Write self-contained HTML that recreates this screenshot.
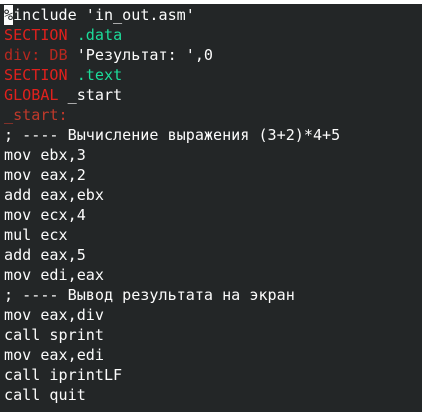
<!DOCTYPE html>
<html><head><meta charset="utf-8"><style>
html,body{margin:0;padding:0;width:424px;height:412px;overflow:hidden;background:#fff;}
#t{position:absolute;left:0;top:4px;width:422px;height:408px;background:#232627;}
pre{margin:0;position:absolute;left:4px;top:1px;font-family:"DejaVu Sans Mono","Liberation Mono",monospace;font-size:15.1px;line-height:20px;color:#fcfcfc;}
.r{color:#e0211d}.d{color:#b8281f}.g{color:#1cdc9a}.b{color:#c0392b}
.c{background:#fcfcfc;color:#232627;display:inline-block;height:20px;vertical-align:top}
</style></head><body><div id="t"><pre><span class="c">%</span>include 'in_out.asm'
<span class="r">SECTION</span> <span class="g">.data</span>
<span class="d">div: DB</span> 'Результат: ',0
<span class="r">SECTION</span> <span class="g">.text</span>
<span class="r">GLOBAL</span> _start
<span class="b">_start:</span>
; ---- Вычисление выражения (3+2)*4+5
mov ebx,3
mov eax,2
add eax,ebx
mov ecx,4
mul ecx
add eax,5
mov edi,eax
; ---- Вывод результата на экран
mov eax,div
call sprint
mov eax,edi
call iprintLF
call quit</pre></div></body></html>
